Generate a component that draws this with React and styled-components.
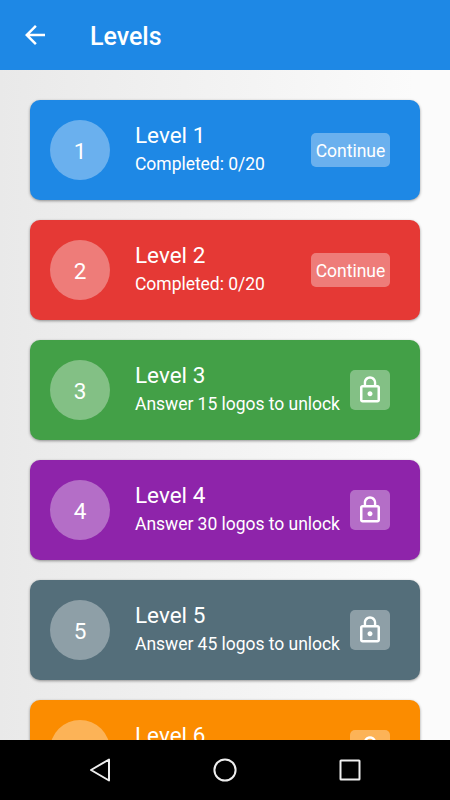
import styled, {createGlobalStyle} from "styled-components";

const levels = [
  {id: 1, color: "#1e88e5", completed: 0},
  {id: 2, color: "#e53935", completed: 0},
  {id: 3, color: "#43a047", required: 15},
  {id: 4, color: "#8e24aa", required: 30},
  {id: 5, color: "#546e7a", required: 45},
  {id: 6, color: "#fb8c00", required: 60},
];

function LevelCard({level}) {
  const locked = Boolean(level.required);
  return (
    <Card $color={level.color}>
      <Badge>{level.id}</Badge>
      <Info>
        <LevelName>Level {level.id}</LevelName>
        <LevelStatus>
          {locked ? `Answer ${level.required} logos to unlock` : `Completed: ${level.completed}/20`}
        </LevelStatus>
      </Info>
      {locked ? (
        <LockButton type="button" aria-label="Locked">
          <svg width="30" height="30" viewBox="0 0 24 24" fill="#fff">
            <path d="M12 17c1.1 0 2-.9 2-2s-.9-2-2-2-2 .9-2 2 .9 2 2 2zm6-9h-1V6c0-2.76-2.24-5-5-5S7 3.24 7 6v2H6c-1.1 0-2 .9-2 2v10c0 1.1.9 2 2 2h12c1.1 0 2-.9 2-2V10c0-1.1-.9-2-2-2zM8.9 6c0-1.71 1.39-3.1 3.1-3.1s3.1 1.39 3.1 3.1v2H8.9V6zM18 20H6V10h12v10z"/>
          </svg>
        </LockButton>
      ) : (
        <ContinueButton type="button">Continue</ContinueButton>
      )}
    </Card>
  );
}

function App() {
  return (
    <>
      <GlobalStyle/>
      <Screen>
        <Header>
          <BackButton type="button" aria-label="Back">
            <svg width="30" height="30" viewBox="0 0 24 24" fill="#fff">
              <path d="M20 11H7.83l5.59-5.59L12 4l-8 8 8 8 1.41-1.41L7.83 13H20v-2z"/>
            </svg>
          </BackButton>
          <Title>Levels</Title>
        </Header>
        <LevelList>
          {levels.map((level) => <LevelCard key={level.id} level={level}/>)}
        </LevelList>
        <NavBar>
          <svg width="30" height="30" viewBox="0 0 30 30">
            <path d="M6 15 L24 4.5 V25.5 Z"/>
          </svg>
          <svg width="30" height="30" viewBox="0 0 30 30">
            <circle cx="15" cy="15" r="10.6"/>
          </svg>
          <svg width="30" height="30" viewBox="0 0 30 30">
            <rect x="5.5" y="5.5" width="19" height="19" rx="0.5"/>
          </svg>
        </NavBar>
      </Screen>
    </>
  );
}

const GlobalStyle = createGlobalStyle`
  * {
    box-sizing: border-box;
  }

  body {
    margin: 0;
    font-family: Roboto, sans-serif;
  }

  button {
    padding: 0;
    border: 0;
    font-family: inherit;
    color: inherit;
  }

  svg {
    display: block;
  }
`

const Screen = styled.div`
  display: flex;
  flex-direction: column;
  width: 450px;
  height: 800px;
  overflow: hidden;
  color: #ffffff;
  background: linear-gradient(90deg, #e9e9e9, #fbfbfb 92%);
`

const Header = styled.header`
  display: flex;
  flex: none;
  align-items: center;
  gap: 40px;
  height: 70px;
  padding: 0 20px;
  background-color: #1e88e5;
`

const BackButton = styled.button`
  width: 30px;
  height: 30px;
  background: none;
`

const Title = styled.h1`
  margin: 4px 0 0;
  font-weight: 500;
  font-size: 25px;
  line-height: 30px;
`

const LevelList = styled.main`
  display: flex;
  flex: 1;
  flex-direction: column;
  gap: 20px;
  min-height: 0;
  padding: 30px 30px 0;
  overflow: hidden;
`

const Card = styled.section`
  display: flex;
  flex: none;
  align-items: center;
  height: 100px;
  padding: 0 30px 0 20px;
  border-radius: 10px;
  background-color: ${({$color}) => $color};
  box-shadow: 0 1px 3px rgba(0, 0, 0, 0.4);
`

const Badge = styled.div`
  display: flex;
  flex: none;
  align-items: center;
  justify-content: center;
  width: 60px;
  height: 60px;
  padding-top: 2px;
  border-radius: 50%;
  font-size: 22.5px;
  background-color: rgba(255, 255, 255, 0.34);
`

const Info = styled.div`
  flex: 1;
  margin-left: 25px;
  padding-bottom: 4px;
  white-space: nowrap;
`

const LevelName = styled.h2`
  margin: 0;
  font-weight: 400;
  font-size: 22.5px;
  line-height: 32px;
`

const LevelStatus = styled.p`
  margin: 1px 0 0;
  font-size: 17.5px;
  line-height: 25px;
  letter-spacing: -0.03px;
`

const ContinueButton = styled.button`
  flex: none;
  width: 79px;
  height: 34px;
  padding-top: 2px;
  border-radius: 5px;
  font-size: 17.5px;
  background-color: rgba(255, 255, 255, 0.34);
`

const LockButton = styled.button`
  display: flex;
  flex: none;
  align-items: center;
  justify-content: center;
  width: 40px;
  height: 40px;
  border-radius: 5px;
  background-color: rgba(255, 255, 255, 0.34);
`

const NavBar = styled.nav`
  display: flex;
  flex: none;
  align-items: center;
  justify-content: space-between;
  height: 60px;
  padding: 0 85px;
  background-color: #000000;

  svg {
    fill: none;
    stroke: #eeeeee;
    stroke-width: 2;
    stroke-linejoin: round;
  }
`

export default App;
